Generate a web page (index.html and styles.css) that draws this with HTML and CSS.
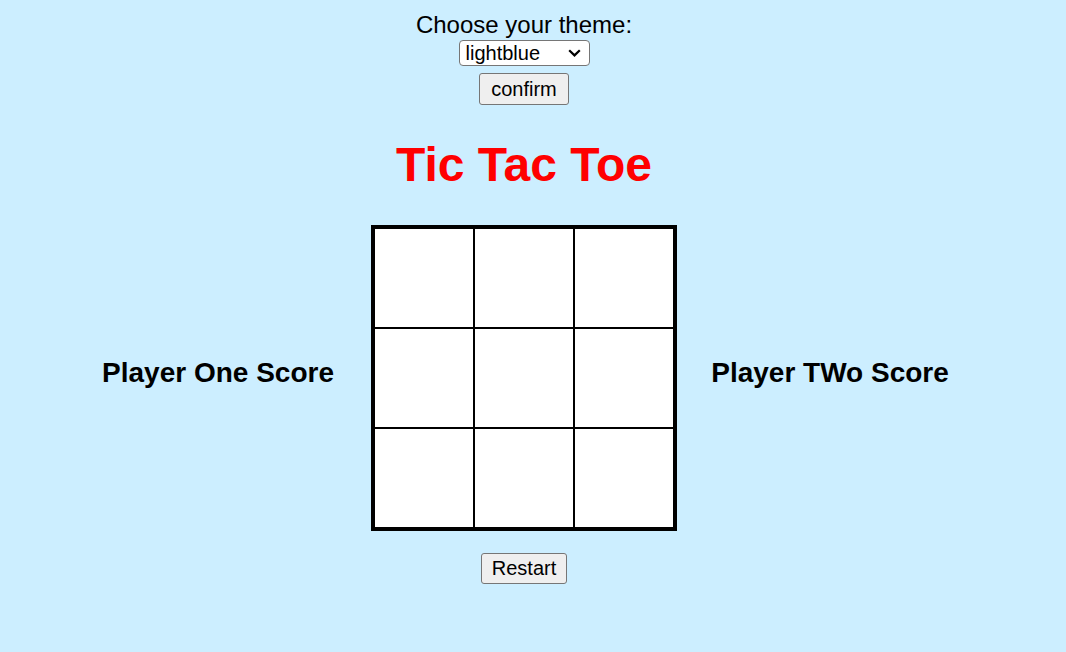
FILE: index.html
```html
<!DOCTYPE html>
<html lang="en">
<head>
<meta charset="utf-8">
<title>Tic Tac Toe</title>
<link rel="stylesheet" href="styles.css">
</head>
<body>
<main class="page">
  <section class="theme">
    <label class="theme-label" for="theme">Choose your theme:</label>
    <div class="select-wrap">
      <select id="theme" class="theme-select">
        <option>lightblue</option>
        <option>lightgreen</option>
        <option>pink</option>
      </select>
      <svg class="chevron" width="13" height="8" viewBox="0 0 13 8" aria-hidden="true">
        <path d="M1.2 1.2 L6.5 6.4 L11.8 1.2" fill="none" stroke="#000" stroke-width="2.2"/>
      </svg>
    </div>
    <button class="btn btn-confirm" type="button">confirm</button>
  </section>

  <h1 class="title">Tic Tac Toe</h1>

  <section class="game">
    <div class="side"><h3 class="score">Player One Score</h3></div>
    <div class="board">
      <div class="cell"></div><div class="cell"></div><div class="cell"></div>
      <div class="cell"></div><div class="cell"></div><div class="cell"></div>
      <div class="cell"></div><div class="cell"></div><div class="cell"></div>
    </div>
    <div class="side"><h3 class="score">Player TWo Score</h3></div>
  </section>

  <div class="restart-row">
    <button class="btn btn-restart" type="button">Restart</button>
  </div>
</main>
</body>
</html>
```

FILE: styles.css
```css
html, body {
  margin: 0;
  padding: 0;
}

body {
  background: #cceeff;
  font-family: "Liberation Sans", Arial, sans-serif;
  color: #000;
  min-height: 652px;
}

.page {
  margin-right: 18px;
  display: flex;
  flex-direction: column;
  align-items: center;
}

.theme {
  display: flex;
  flex-direction: column;
  align-items: center;
  padding-top: 11px;
}

.theme-label {
  font-size: 24px;
  line-height: 28px;
}

.select-wrap {
  position: relative;
  margin-top: 1px;
}

.theme-select {
  appearance: none;
  -webkit-appearance: none;
  box-sizing: border-box;
  width: 131px;
  height: 26px;
  margin: 0;
  padding: 0 0 0 6px;
  font-family: "Liberation Sans", Arial, sans-serif;
  font-size: 20px;
  color: #000;
  background: #fff;
  border: 1px solid #767676;
  border-radius: 4px;
  display: block;
}

.chevron {
  position: absolute;
  right: 9px;
  top: 9px;
  pointer-events: none;
}

.btn {
  box-sizing: border-box;
  height: 32px;
  padding: 0 11px;
  margin: 0;
  font-family: "Liberation Sans", Arial, sans-serif;
  font-size: 20px;
  color: #000;
  background: #efefef;
  border: 1px solid #767676;
  border-radius: 3px;
}

.btn-confirm {
  margin-top: 7px;
}

.btn-restart {
  height: 31px;
  padding: 0 10px;
}

.title {
  margin: 32px 0;
  font-size: 48px;
  line-height: 56px;
  font-weight: bold;
  color: #ff0000;
}

.game {
  display: flex;
  align-items: center;
  justify-content: center;
}

.side {
  width: 306px;
  display: flex;
  justify-content: center;
  padding-bottom: 10px;
}

.score {
  margin: 0;
  font-size: 28px;
  line-height: 32px;
  font-weight: bold;
}

.board {
  box-sizing: border-box;
  width: 306px;
  height: 306px;
  border: 3px solid #000;
  background: #fff;
  display: grid;
  grid-template-columns: repeat(3, 100px);
  grid-template-rows: repeat(3, 100px);
}

.cell {
  box-sizing: border-box;
  border: 1px solid #000;
  background: #fff;
}

.restart-row {
  margin-top: 22px;
}
```
